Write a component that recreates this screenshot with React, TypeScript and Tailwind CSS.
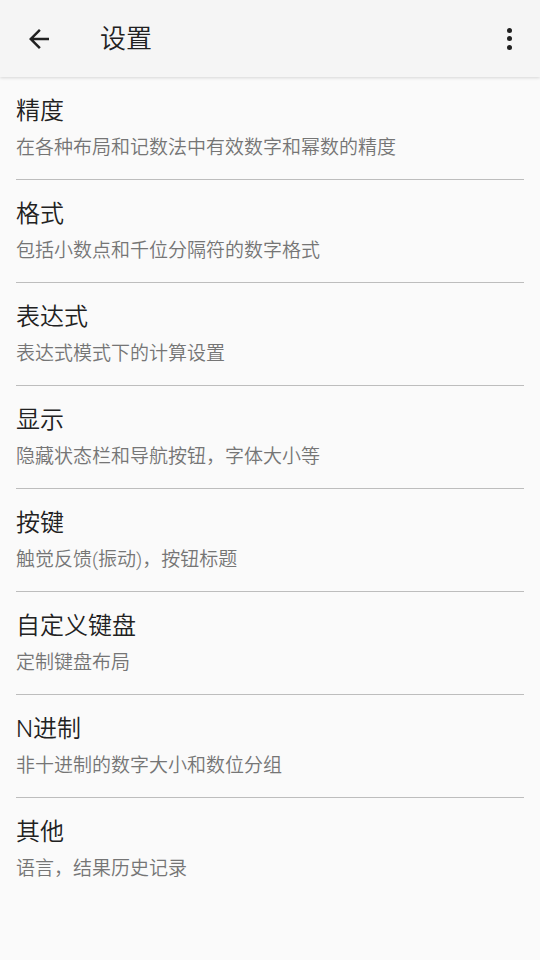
const items = [
  { title: "精度", desc: "在各种布局和记数法中有效数字和幂数的精度" },
  { title: "格式", desc: "包括小数点和千位分隔符的数字格式" },
  { title: "表达式", desc: "表达式模式下的计算设置" },
  { title: "显示", desc: "隐藏状态栏和导航按钮，字体大小等" },
  { title: "按键", desc: "触觉反馈(振动)，按钮标题" },
  { title: "自定义键盘", desc: "定制键盘布局" },
  { title: "N进制", desc: "非十进制的数字大小和数位分组" },
  { title: "其他", desc: "语言，结果历史记录" },
];

export default function App() {
  return (
    <div
      className="flex h-[960px] w-[540px] flex-col bg-[#fafafa]"
      style={{ fontFamily: 'Roboto, "Noto Sans CJK SC", sans-serif' }}
    >
      {/* Toolbar */}
      <div className="relative z-10 flex h-[77px] shrink-0 items-center bg-[#f5f5f5] shadow-[0_1px_3px_rgba(0,0,0,0.15)]">
        <div className="flex w-[100px] items-center pl-[24px]">
          <svg width="30" height="30" viewBox="0 0 24 24" className="text-[#212121]">
            <path
              d="M20 11H7.83l5.59-5.59L12 4l-8 8 8 8 1.41-1.41L7.83 13H20v-2z"
              fill="currentColor"
            />
          </svg>
        </div>
        <h1 className="flex-1 text-[26px] font-[350] leading-none text-[#212121]">设置</h1>
        <div className="flex w-[60px] items-center justify-center pr-[2px]">
          <div className="flex flex-col items-center gap-[3.5px]">
            <span className="h-[5px] w-[5px] rounded-full bg-[#212121]" />
            <span className="h-[5px] w-[5px] rounded-full bg-[#212121]" />
            <span className="h-[5px] w-[5px] rounded-full bg-[#212121]" />
          </div>
        </div>
      </div>

      {/* Preference list */}
      <div className="flex flex-col">
        {items.map((item, idx) => (
          <div key={idx} className="px-[16px]">
            <div className="flex h-[102px] flex-col pt-[18px]">
              <p className="text-[24px] font-[350] leading-[32px] text-[#212121]">{item.title}</p>
              <p className="mt-[8px] text-[19px] font-[350] leading-[26px] text-[#757575]">
                {item.desc}
              </p>
            </div>
            {idx < items.length - 1 && <div className="h-px bg-[#bdbdbd]" />}
          </div>
        ))}
      </div>
    </div>
  );
}
